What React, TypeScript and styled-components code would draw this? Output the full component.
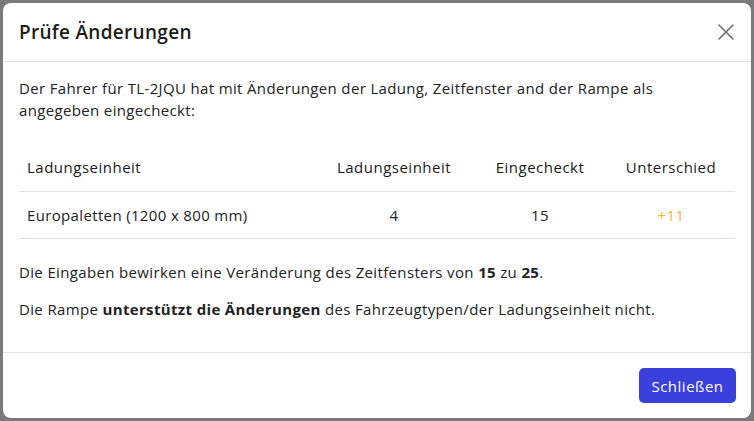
import React from "react";
import styled, { createGlobalStyle } from "styled-components";

const Global = createGlobalStyle`
  html, body { margin: 0; padding: 0; }
  body {
    width: 754px;
    height: 421px;
    overflow: hidden;
    background: #7a7a7a;
    font-family: "Open Sans", "Liberation Sans", sans-serif;
  }
`;

const Backdrop = styled.div`
  width: 754px;
  height: 421px;
  box-sizing: border-box;
  padding: 3px;
  display: flex;
`;

const Modal = styled.div`
  flex: 1;
  background: #fff;
  border-radius: 8px;
  display: flex;
  flex-direction: column;
  overflow: hidden;
  color: #222;
`;

const Header = styled.div`
  height: 59px;
  box-sizing: border-box;
  padding: 0 16px;
  display: flex;
  align-items: center;
  justify-content: space-between;
  border-bottom: 1px solid #e2e2e8;
`;

const Title = styled.h2`
  margin: 0;
  font-size: 19px;
  letter-spacing: 0.3px;
  font-weight: 600;
  color: #1c1c1c;
`;

const CloseButton = styled.button`
  border: 0;
  background: none;
  padding: 0;
  width: 18px;
  height: 18px;
  display: flex;
  align-items: center;
  justify-content: center;
  cursor: pointer;
`;

const Body = styled.div`
  flex: 1;
  padding: 15px 16px 0 16px;
  border-bottom: 1px solid #e2e2e8;
  font-size: 15px;
  letter-spacing: 0.35px;
`;

const Text = styled.p<{ $gap?: number }>`
  margin: 0 0 ${(p) => p.$gap ?? 15}px 0;
  line-height: 22px;
`;

const Table = styled.table`
  width: 100%;
  table-layout: fixed;
  border-collapse: collapse;
  margin: 23px 0 22px 0;
  font-size: 15px;
  letter-spacing: 0.35px;
`;

const Th = styled.th<{ $w?: number; $left?: boolean }>`
  box-sizing: border-box;
  width: ${(p) => (p.$w ? `${p.$w}px` : "auto")};
  text-align: ${(p) => (p.$left ? "left" : "center")};
  font-weight: 500;
  color: #1a1a1a;
  letter-spacing: 0.5px;
  height: 47px;
  padding: 0 8px;
  border-bottom: 1px solid #e2e2e8;
`;

const Td = styled.td<{ $left?: boolean; $accent?: boolean }>`
  text-align: ${(p) => (p.$left ? "left" : "center")};
  height: 46px;
  padding: 0 8px;
  border-bottom: 1px solid #e2e2e8;
  color: ${(p) => (p.$accent ? "#f8b727" : "#222")};
`;

const Footer = styled.div`
  height: 65px;
  display: flex;
  align-items: center;
  justify-content: flex-end;
  padding: 0 15px;
`;

const PrimaryButton = styled.button`
  height: 35px;
  width: 97px;
  border: 0;
  border-radius: 5px;
  background: #3b3fdb;
  color: #fff;
  font-family: inherit;
  font-size: 15px;
  font-weight: 500;
  letter-spacing: 0.5px;
`;

const CloseIcon = () => (
  <svg width="16" height="16" viewBox="0 0 16 16" fill="none">
    <path d="M1 1L15 15M15 1L1 15" stroke="#6f6f6f" strokeWidth="1.6" strokeLinecap="round" />
  </svg>
);

export default function App() {
  return (
    <>
      <Global />
      <Backdrop>
        <Modal>
          <Header>
            <Title>Prüfe Änderungen</Title>
            <CloseButton aria-label="Schließen">
              <CloseIcon />
            </CloseButton>
          </Header>
          <Body>
            <Text $gap={0}>
              Der Fahrer für TL-2JQU hat mit Änderungen der Ladung, Zeitfenster and der Rampe als
              angegeben eingecheckt:
            </Text>
            <Table>
              <thead>
                <tr>
                  <Th $left>Ladungseinheit</Th>
                  <Th $w={158}>Ladungseinheit</Th>
                  <Th $w={134}>Eingecheckt</Th>
                  <Th $w={128}>Unterschied</Th>
                </tr>
              </thead>
              <tbody>
                <tr>
                  <Td $left>Europaletten (1200 x 800 mm)</Td>
                  <Td>4</Td>
                  <Td>15</Td>
                  <Td $accent>+11</Td>
                </tr>
              </tbody>
            </Table>
            <Text>
              Die Eingaben bewirken eine Veränderung des Zeitfensters von <b>15</b> zu <b>25</b>.
            </Text>
            <Text>
              Die Rampe <b>unterstützt die Änderungen</b> des Fahrzeugtypen/der Ladungseinheit nicht.
            </Text>
          </Body>
          <Footer>
            <PrimaryButton>Schließen</PrimaryButton>
          </Footer>
        </Modal>
      </Backdrop>
    </>
  );
}
